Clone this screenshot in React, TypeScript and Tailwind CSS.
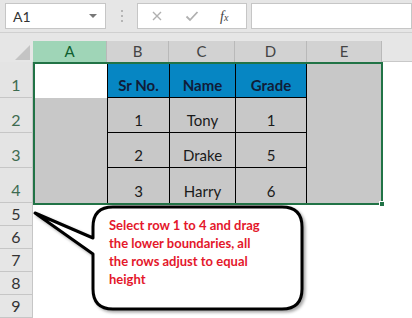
import React from "react";

const font = { fontFamily: "Lato, 'Open Sans', sans-serif" };

const cols = [
  { name: "A", w: "w-[74px]" },
  { name: "B", w: "w-[62px]" },
  { name: "C", w: "w-[66px]" },
  { name: "D", w: "w-[72px]" },
  { name: "E", w: "w-[75px]" },
];

const rows = [
  { n: 1, h: "h-[36px]", cells: ["", "Sr No.", "Name", "Grade", ""] },
  { n: 2, h: "h-[35px]", cells: ["", "1", "Tony", "1", ""] },
  { n: 3, h: "h-[35px]", cells: ["", "2", "Drake", "5", ""] },
  { n: 4, h: "h-[35px]", cells: ["", "3", "Harry", "6", ""] },
];

function Cell({ r, c, text }: { r: number; c: number; text: string }) {
  const w = cols[c].w;
  if (c === 0) {
    return <div className={`${w} h-full ${r === 1 ? "bg-white" : "bg-[#c8c8c8]"}`} />;
  }
  if (c === 4) {
    return <div className={`${w} h-full bg-[#c8c8c8]`} />;
  }
  const header = r === 1;
  return (
    <div
      className={`${w} h-full flex items-end justify-center pb-[2px] border-l border-black ${c === 3 ? "border-r" : ""} ${
        r < 4 ? "border-b" : ""
      } ${header ? "bg-[#0686c3] font-bold text-[#101c38]" : "bg-[#c8c8c8] text-[#1a1a1a]"} text-[15px] leading-none`}
    >
      <span className="mb-[2px]">{text}</span>
    </div>
  );
}

export default function App() {
  return (
    <div className="relative w-[412px] h-[318px] overflow-hidden bg-white" style={font}>
      {/* formula bar */}
      <div className="h-[33px] bg-[#e6e6e6] border-b border-[#d0d0d0] flex items-center">
        <div className="ml-[5px] w-[101px] h-[26px] bg-white border border-[#c6c6c6] flex items-center justify-between px-[7px]">
          <span className="text-[14px] text-[#333]">A1</span>
          <span className="w-0 h-0 border-l-[4px] border-r-[4px] border-t-[4px] border-l-transparent border-r-transparent border-t-[#777] mr-[1px]" />
        </div>
        <div className="w-[31px] flex flex-col items-center gap-[3px]">
          <span className="w-[2px] h-[2px] bg-[#b5b5b5]" />
          <span className="w-[2px] h-[2px] bg-[#b5b5b5]" />
          <span className="w-[2px] h-[2px] bg-[#b5b5b5]" />
        </div>
        <div className="w-[110px] h-[26px] bg-white border border-[#c6c6c6] flex items-center">
          <svg width="12" height="12" viewBox="0 0 12 12" className="ml-[13px]">
            <path d="M2 2 L10 10 M10 2 L2 10" stroke="#b0b0b0" strokeWidth="1.4" />
          </svg>
          <svg width="14" height="12" viewBox="0 0 14 12" className="ml-[22px]">
            <path d="M1.5 6.5 L5 10 L12.5 2" stroke="#b0b0b0" strokeWidth="1.8" fill="none" />
          </svg>
          <span className="ml-[21px] text-[14px] italic text-[#444]" style={{ fontFamily: "'Liberation Serif', serif" }}>
            f<span className="text-[10px]">x</span>
          </span>
        </div>
        <div className="ml-[4px] flex-1 h-[26px] bg-white border border-[#c6c6c6]" />
      </div>

      {/* header row */}
      <div className="h-[29px] bg-[#e6e6e6] flex items-end">
        <div className="w-[33px] h-[21px] flex items-end justify-end pr-[3px] pb-[2px]">
          <svg width="15" height="15" viewBox="0 0 15 15">
            <path d="M15 0 L15 15 L0 15 Z" fill="#c4c4c4" />
          </svg>
        </div>
        {cols.map((c, i) => (
          <div
            key={c.name}
            className={`${c.w} h-[21px] flex items-center justify-center text-[15px] border-r border-[#b9b9b9] ${
              i === 0 ? "bg-[#9fd5b7] text-[#0f5f2f]" : "bg-[#d2d2d2] text-[#444]"
            }`}
          >
            {c.name}
          </div>
        ))}
        <div className="flex-1 h-[21px] border-b border-[#c8c8c8]" />
      </div>

      {/* data rows */}
      {rows.map((row) => (
        <div key={row.n} className={`flex ${row.h}`}>
          <div className="w-[33px] h-full bg-[#e4e4e4] border-b border-r border-[#c6c6c6] flex items-end justify-center pb-[4px] text-[16px] text-[#3d6b50] leading-none">
            {row.n}
          </div>
          {row.cells.map((t, c) => (
            <Cell key={c} r={row.n} c={c} text={t} />
          ))}
        </div>
      ))}
      {[5, 6, 7, 8, 9].map((n) => (
        <div key={n} className="flex h-[23px]">
          <div className="w-[33px] h-full bg-[#e6e6e6] border-b border-r border-[#c6c6c6] flex items-end justify-center pb-[3px] text-[16px] text-[#333] leading-none">
            {n}
          </div>
        </div>
      ))}

      {/* selection border */}
      <div className="absolute left-[33px] top-[62px] w-[350px] h-[143px] border-2 border-[#217346] pointer-events-none" />
      <div className="absolute left-[379px] top-[201px] w-[6px] h-[6px] bg-[#217346] border border-white" />

      {/* callout */}
      <svg width="412" height="318" className="absolute left-0 top-0 pointer-events-none">
        <defs>
          <filter id="sh" x="-10%" y="-10%" width="130%" height="130%">
            <feDropShadow dx="2" dy="2" stdDeviation="1.5" floodColor="#000" floodOpacity="0.35" />
          </filter>
        </defs>
        <path
          d="M113 207 H282 Q302 207 302 227 V289 Q302 309 282 309 H113 Q93 309 93 289 V254 L35 213 L93 238 V227 Q93 207 113 207 Z"
          fill="#fff"
          stroke="#000"
          strokeWidth="3"
          strokeLinejoin="round"
          filter="url(#sh)"
        />
      </svg>
      <div className="absolute left-[109px] top-[216px] text-[13px] leading-[18px] font-bold text-[#e4172b] whitespace-nowrap">
        Select row 1 to 4 and drag
        <br />
        the lower boundaries, all
        <br />
        the rows adjust to equal
        <br />
        height
      </div>
    </div>
  );
}
